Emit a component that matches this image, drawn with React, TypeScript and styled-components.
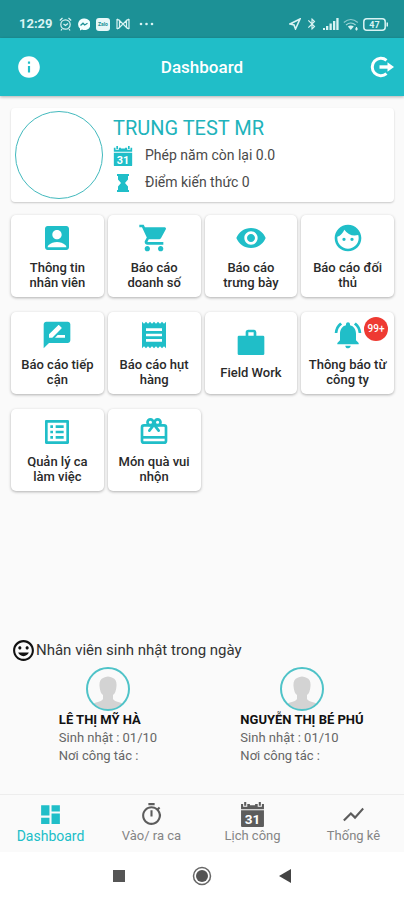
import React from "react";
import styled, { createGlobalStyle } from "styled-components";
import {
  MdAccountBox,
  MdBluetooth,
  MdDashboard,
  MdFace,
  MdInfo,
  MdInsertEmoticon,
  MdListAlt,
  MdNotificationsActive,
  MdOutlineTimer,
  MdRateReview,
  MdReceipt,
  MdRemoveRedEye,
  MdShoppingCart,
  MdShowChart,
} from "react-icons/md";

const teal = "#20bec8";

const GlobalStyle = createGlobalStyle`
  * { box-sizing: border-box; }
  body {
    margin: 0;
    background: #fafafa;
    color: #222;
    font-family: Roboto, "Noto Sans", sans-serif;
  }
  button { font: inherit; color: inherit; border: 0; padding: 0; background: none; cursor: pointer; }
  svg { display: block; flex: none; }
  h1, h2, h3, p, ul { margin: 0; padding: 0; }
  ul { list-style: none; }
`;

const Page = styled.div`
  display: flex;
  flex-direction: column;
  min-height: 100vh;
`;

const StatusBar = styled.div`
  display: flex;
  align-items: center;
  justify-content: space-between;
  height: 38px;
  padding: 10px 15px 0 19px;
  background: #1c9196;
  color: #d9f3f3;
`;

const StatusGroup = styled.div<{ $gap: number }>`
  display: flex;
  align-items: center;
  gap: ${(p) => p.$gap}px;
`;

const Clock = styled.span`
  font-size: 13px;
  line-height: 16px;
  font-weight: 700;
`;

const Header = styled.header`
  display: grid;
  grid-template-columns: 26px 1fr 32px;
  align-items: center;
  height: 58px;
  padding: 0 10px 0 16px;
  background: ${teal};
  color: #fff;
  box-shadow: 0 1px 3px rgba(0, 0, 0, 0.3);
`;

const HeaderButton = styled.button`
  display: flex;
  justify-content: flex-end;
`;

const Title = styled.h1`
  text-align: center;
  font-size: 17px;
  line-height: 24px;
  font-weight: 500;
`;

const Main = styled.main`
  display: flex;
  flex-direction: column;
  flex: 1;
  padding: 12px 10px 29px 11px;
`;

const Card = styled.section`
  display: flex;
  align-items: center;
  gap: 10px;
  padding: 3px 4px;
  background: #fff;
  border-radius: 4px;
  box-shadow: 0 1px 2px rgba(0, 0, 0, 0.2);
`;

const Avatar = styled.div`
  width: 88px;
  height: 88px;
  border: 1px solid #42b9bd;
  border-radius: 50%;
`;

const Profile = styled.div`
  display: flex;
  flex-direction: column;
  color: #333;
`;

const UserName = styled.h2`
  font-size: 20px;
  line-height: 28px;
  font-weight: 400;
  color: #21b3bb;
`;

const ProfileRow = styled.p`
  display: grid;
  grid-template-columns: 20px auto;
  align-items: center;
  justify-content: start;
  gap: 12px;
  font-size: 14px;
  line-height: 27px;
  color: #4a4a4a;

  svg { color: ${teal}; justify-self: center; }
`;

const Tiles = styled.nav`
  display: grid;
  grid-template-columns: repeat(4, 1fr);
  gap: 15px 4px;
  margin-top: 13px;
`;

const Tile = styled.button`
  position: relative;
  display: flex;
  flex-direction: column;
  align-items: center;
  justify-content: center;
  gap: 6px;
  height: 82px;
  padding: 0 6px;
  background: #fff;
  border-radius: 5px;
  box-shadow: 0 1px 3px rgba(0, 0, 0, 0.3);
  font-size: 13px;
  line-height: 15px;
  font-weight: 500;
  color: #2a2a2a;

  svg { color: ${teal}; }
`;

const Badge = styled.span`
  position: absolute;
  top: 5px;
  right: 6px;
  width: 24px;
  height: 24px;
  border-radius: 50%;
  background: #ee3a32;
  color: #fff;
  font-size: 10px;
  line-height: 24px;
  font-weight: 500;
`;

const Birthdays = styled.section`
  margin-top: auto;
  padding-top: 24px;
`;

const SectionTitle = styled.h2`
  display: flex;
  align-items: center;
  font-size: 15px;
  line-height: 26px;
  font-weight: 400;
  color: #333;

  svg { color: #111; }
`;

const People = styled.ul`
  display: grid;
  grid-template-columns: 1fr 1fr;
  margin: 4px -5px 0 0;
`;

const Person = styled.li`
  display: flex;
  flex-direction: column;
  align-items: center;
  font-size: 13px;
  line-height: 18px;
  color: #666;
`;

const PersonName = styled.h3`
  font-size: 13px;
  line-height: 18px;
  font-weight: 700;
  color: #111;
`;

const TabBar = styled.nav`
  display: grid;
  grid-template-columns: repeat(4, 1fr);
  height: 58px;
  background: #fafafa;
  border-top: 1px solid #ededed;
`;

const Tab = styled.button<{ $active?: boolean }>`
  && { color: ${(p) => (p.$active ? teal : "#858585")}; }
  display: flex;
  flex-direction: column;
  align-items: center;
  justify-content: center;
  font-size: ${(p) => (p.$active ? 14 : 13)}px;
  line-height: 18px;

  svg { color: ${(p) => (p.$active ? teal : "#5c5c5c")}; }
`;

const SystemBar = styled.div`
  display: flex;
  align-items: center;
  justify-content: center;
  gap: 67px;
  height: 48px;
  background: #fff;
`;

function CalendarIcon({ size }: { size: number }) {
  return (
    <svg width={size} height={size} viewBox="0 0 24 24" fill="currentColor" aria-hidden="true">
      <path d="M1 2h2v2.500h4V2h2.500v1h5V2H17v2.500h4V2h2v5H1zM4 0h2v3.500H4zM18 0h2v3.500h-2z" />
      <path d="M1 8h22v15a1 1 0 0 1-1 1H2a1 1 0 0 1-1-1z" />
      <text x="12" y="21" textAnchor="middle" fontSize="13" fontWeight="700" fill="#fff">31</text>
    </svg>
  );
}

function HourglassIcon() {
  return (
    <svg width="12" height="18" viewBox="0 0 12 18" fill="currentColor" aria-hidden="true">
      <path d="M0 0h12v2h-1v3.500L8 9l3 3.500V16h1v2H0v-2h1v-3.500L4 9 1 5.500V2H0z" />
    </svg>
  );
}

function BriefcaseIcon({ size }: { size: number }) {
  return (
    <svg width={size} height={size} viewBox="0 0 24 24" fill="currentColor" aria-hidden="true">
      <path d="M3 6.500h5V4a2 2 0 0 1 2-2h4a2 2 0 0 1 2 2v2.500h5a1 1 0 0 1 1 1V20a1 1 0 0 1-1 1H3a1 1 0 0 1-1-1V7.500a1 1 0 0 1 1-1m7 0h4V4h-4z" />
    </svg>
  );
}

function GiftIcon({ size }: { size: number }) {
  return (
    <svg width={size} height={size} viewBox="0 0 24 24" fill="none" stroke="currentColor" strokeWidth="2" aria-hidden="true">
      <rect x="3" y="7" width="18" height="13" rx="1.500" />
      <path d="M3 16h18" />
      <path d="M12 6.500 8.500 11M12 6.500l3.500 4.500" strokeLinecap="round" />
      <circle cx="9.300" cy="4.700" r="2.200" />
      <circle cx="14.700" cy="4.700" r="2.200" />
    </svg>
  );
}

function LogoutIcon() {
  return (
    <svg width="24" height="22" viewBox="0 0 24 22" fill="none" stroke="currentColor" aria-hidden="true">
      <path d="M16.500 4.300A8.700 8.700 0 1 0 16.500 17.700" strokeWidth="3" />
      <path d="M9.500 11H19" strokeWidth="3.400" />
      <path d="M17.500 6.200 24 11l-6.500 4.800z" fill="currentColor" stroke="none" />
    </svg>
  );
}

function Portrait() {
  const clipId = React.useId();
  return (
    <svg width="44" height="44" viewBox="0 0 44 44" aria-hidden="true">
      <clipPath id={clipId}>
        <circle cx="22" cy="22" r="20.500" />
      </clipPath>
      <path
        clipPath={`url(#${clipId})`}
        d="M17 11q5-3 10 0 4 2 3.500 8-.5 7-3.500 9v4q1 2 7 3.500 4 1 5 3V44H5v-5.500q1-2 5-3Q16 34 17 32v-4q-3-2-3.500-9-.5-6 3.500-8"
        fill="#d3d3d3"
      />
      <circle cx="22" cy="22" r="21" fill="none" stroke="#4fc3c8" strokeWidth="2" />
    </svg>
  );
}

function AlarmIcon() {
  return (
    <svg width="13" height="14" viewBox="0 0 13 14" fill="none" stroke="currentColor" strokeWidth="1.200" aria-hidden="true">
      <circle cx="6.500" cy="7.500" r="4.700" />
      <path d="M.8 3.500 3.500 1M12.200 3.500 9.500 1M4.500 7l2 1.500L9 6.500M3 12l-1 1.500M10 12l1 1.500" />
    </svg>
  );
}

function MessengerIcon() {
  return (
    <svg width="12" height="13" viewBox="0 0 12 13" aria-hidden="true">
      <path d="M6 .5a5.700 5.700 0 0 0-4 9.900v2.100l2-1.100A5.800 5.800 0 1 0 6 .5" fill="#f2ffff" />
      <path d="m2.500 7.500 2.500-2.300L6.700 7l2.800-1.700" fill="none" stroke="#1c9196" strokeWidth="1.300" />
    </svg>
  );
}

function ZaloIcon() {
  return (
    <svg width="14" height="13" viewBox="0 0 14 13" aria-hidden="true">
      <rect width="14" height="13" rx="3" fill="#e8f8f8" />
      <text x="7" y="8" textAnchor="middle" fontSize="5" fontWeight="700" fill="#1c9196">Zalo</text>
    </svg>
  );
}

function BowIcon() {
  return (
    <svg width="14" height="12" viewBox="0 0 14 12" fill="none" stroke="currentColor" strokeWidth="1.200" aria-hidden="true">
      <path d="M1 1v10M13 1v10M3.500 2.500v7L7 6zM10.500 2.500v7L7 6zM1 1l2.500 1.500M13 1l-2.500 1.500M1 11l2.500-1.500M13 11l-2.500-1.500" />
    </svg>
  );
}

function MoreIcon() {
  return (
    <svg width="18" height="4" viewBox="0 0 18 4" fill="currentColor" aria-hidden="true">
      <circle cx="5" cy="2" r="1.300" />
      <circle cx="10.500" cy="2" r="1.300" />
      <circle cx="16" cy="2" r="1.300" />
    </svg>
  );
}

function LocationIcon() {
  return (
    <svg width="12" height="12" viewBox="0 0 12 12" fill="none" stroke="currentColor" strokeWidth="1.600" aria-hidden="true">
      <path d="M11 1 1 6l4 1 1.500 4z" />
    </svg>
  );
}

function SignalIcon() {
  return (
    <svg width="16" height="12" viewBox="0 0 16 12" fill="currentColor" aria-hidden="true">
      <path d="M0 10h2v2H0zM3 8h2.300v4H3zM6.500 5.500h2.300V12H6.500zM10 3h2.300v9H10zM13.300 0h2.300v12h-2.300z" />
    </svg>
  );
}

function WifiIcon() {
  return (
    <svg width="16" height="13" viewBox="0 0 16 13" fill="none" stroke="currentColor" strokeWidth="1.200" aria-hidden="true">
      <path d="M.8 4.500q7-6 14 0" opacity=".6" />
      <path d="M3 7q4.800-4 9.600 0" opacity=".7" />
      <path d="m4.800 8.500 3 3.500 3-3.500q-3-2-6 0z" fill="currentColor" stroke="none" />
      <path d="M13.500 9v3.500M12 11h3" />
    </svg>
  );
}

function BatteryIcon() {
  return (
    <svg width="26" height="13" viewBox="0 0 26 13" aria-hidden="true">
      <rect x=".8" y=".8" width="21.400" height="11.400" rx="3" fill="none" stroke="currentColor" strokeWidth="1.500" />
      <path d="M23.500 4.500H25v4h-1.500z" fill="currentColor" />
      <text x="11.500" y="9.500" textAnchor="middle" fontSize="9" fontWeight="700" fill="currentColor">47</text>
    </svg>
  );
}

const tiles = [
  { label: "Thông tin nhân viên", Icon: MdAccountBox },
  { label: "Báo cáo doanh số", Icon: MdShoppingCart },
  { label: "Báo cáo trưng bày", Icon: MdRemoveRedEye },
  { label: "Báo cáo đối thủ", Icon: MdFace },
  { label: "Báo cáo tiếp cận", Icon: MdRateReview },
  { label: "Báo cáo hụt hàng", Icon: MdReceipt },
  { label: "Field Work", Icon: BriefcaseIcon },
  { label: "Thông báo từ công ty", Icon: MdNotificationsActive, badge: "99+" },
  { label: "Quản lý ca làm việc", Icon: MdListAlt },
  { label: "Món quà vui nhộn", Icon: GiftIcon },
];

const people = [
  { name: "LÊ THỊ MỸ HÀ", birthday: "01/10" },
  { name: "NGUYỄN THỊ BÉ PHÚ", birthday: "01/10" },
];

export default function App() {
  return (
    <>
      <GlobalStyle />
      <Page>
        <StatusBar>
          <StatusGroup $gap={6}>
            <Clock>12:29</Clock>
            <AlarmIcon />
            <MessengerIcon />
            <ZaloIcon />
            <BowIcon />
            <MoreIcon />
          </StatusGroup>
          <StatusGroup $gap={4}>
            <LocationIcon />
            <MdBluetooth size={14} />
            <SignalIcon />
            <WifiIcon />
            <BatteryIcon />
          </StatusGroup>
        </StatusBar>
        <Header>
          <HeaderButton aria-label="Info"><MdInfo size={26} /></HeaderButton>
          <Title>Dashboard</Title>
          <HeaderButton aria-label="Log out"><LogoutIcon /></HeaderButton>
        </Header>
        <Main>
          <Card>
            <Avatar />
            <Profile>
              <UserName>TRUNG TEST MR</UserName>
              <ProfileRow><CalendarIcon size={20} />Phép năm còn lại 0.0</ProfileRow>
              <ProfileRow><HourglassIcon />Điểm kiến thức 0</ProfileRow>
            </Profile>
          </Card>
          <Tiles>
            {tiles.map(({ label, Icon, badge }) => (
              <Tile key={label}>
                <Icon size={32} />
                {label}
                {badge && <Badge>{badge}</Badge>}
              </Tile>
            ))}
          </Tiles>
          <Birthdays>
            <SectionTitle><MdInsertEmoticon size={25} />Nhân viên sinh nhật trong ngày</SectionTitle>
            <People>
              {people.map((person) => (
                <Person key={person.name}>
                  <Portrait />
                  <div>
                    <PersonName>{person.name}</PersonName>
                    <p>Sinh nhật : {person.birthday}</p>
                    <p>Nơi công tác :</p>
                  </div>
                </Person>
              ))}
            </People>
          </Birthdays>
        </Main>
        <TabBar>
          <Tab $active><MdDashboard size={25} />Dashboard</Tab>
          <Tab><MdOutlineTimer size={25} />Vào/ ra ca</Tab>
          <Tab><CalendarIcon size={25} />Lịch công</Tab>
          <Tab><MdShowChart size={25} />Thống kê</Tab>
        </TabBar>
        <SystemBar>
          <button aria-label="Recent apps">
            <svg width="12" height="12" viewBox="0 0 12 12"><path d="M0 0h12v12H0z" fill="#555" /></svg>
          </button>
          <button aria-label="Home">
            <svg width="20" height="20" viewBox="0 0 20 20">
              <circle cx="10" cy="10" r="8.500" fill="none" stroke="#666" strokeWidth="1.500" />
              <circle cx="10" cy="10" r="6" fill="#555" />
            </svg>
          </button>
          <button aria-label="Back">
            <svg width="12" height="14" viewBox="0 0 12 14"><path d="M12 0v14L0 7z" fill="#444" /></svg>
          </button>
        </SystemBar>
      </Page>
    </>
  );
}
